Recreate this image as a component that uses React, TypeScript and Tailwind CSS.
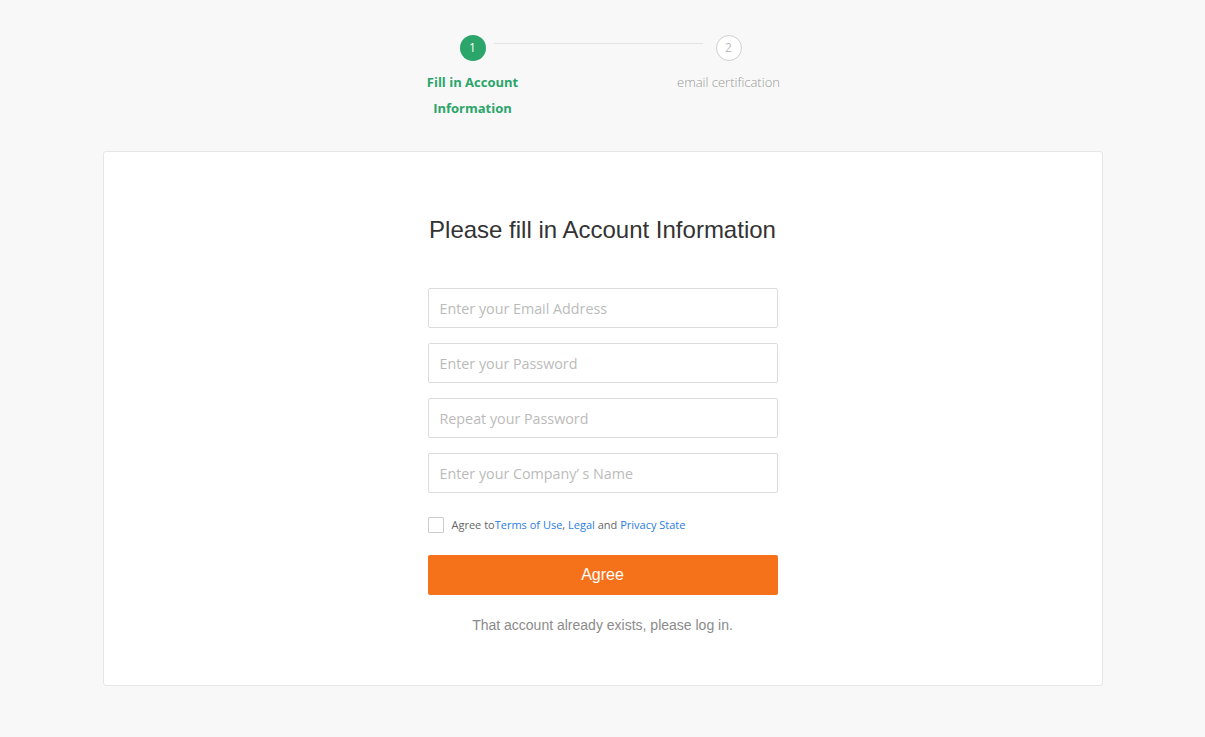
import { useState } from "react";

const cn = "font-['Open_Sans',sans-serif]";

export default function App() {
  const [agreed, setAgreed] = useState(false);

  const fields = [
    "Enter your Email Address",
    "Enter your Password",
    "Repeat your Password",
    "Enter your Company’ s Name",
  ];

  return (
    <div className="min-h-[737px] bg-[#f8f8f8] pt-[35px] pb-[50px]">
      {/* steps */}
      <div className={`relative mx-auto flex w-[370px] justify-between pr-[4px] ${cn}`}>
        <div className="absolute left-[76px] right-[85px] top-[8px] h-px bg-[#e2e2e2]" />
        <div className="relative flex w-[110px] flex-col items-center">
          <div className="flex h-[26px] w-[26px] items-center justify-center rounded-full bg-[#2ba56a] text-[12px] text-white">
            1
          </div>
          <div className="mt-[8px] text-center text-[13px] font-bold leading-[26px] text-[#2ba56a]">
            Fill in Account
            <br />
            Information
          </div>
        </div>
        <div className="relative flex w-[110px] flex-col items-center">
          <div className="flex h-[26px] w-[26px] items-center justify-center rounded-full border border-[#cfcfcf] bg-white text-[12px] text-[#bbb]">
            2
          </div>
          <div className="mt-[8px] text-center text-[13px] font-light leading-[26px] text-[#999]">
            email certification
          </div>
        </div>
      </div>

      {/* card */}
      <div className="mx-auto mt-[30px] w-[1000px] rounded-[3px] border border-[#e6e6e6] bg-white pt-[62px] pb-[50px]">
        <h1 className="text-center font-['Liberation_Sans',Arial,sans-serif] text-[24px] leading-[32px] text-[#333]">
          Please fill in Account Information
        </h1>

        <form className="mx-auto mt-[42px] flex w-[350px] flex-col">
          <div className="flex flex-col gap-[15px]">
            {fields.map((f) => (
              <input
                key={f}
                type={f.includes("Password") ? "password" : "text"}
                placeholder={f}
                className={`h-[40px] w-full rounded-[2px] border border-[#dcdcdc] px-[11px] text-[14.3px] text-[#333] outline-none placeholder:text-[#bbb] ${cn}`}
              />
            ))}
          </div>

          <label className={`mt-[24px] flex h-[16px] items-center gap-[8px] text-[11px] text-[#666] ${cn}`}>
            <input
              type="checkbox"
              checked={agreed}
              onChange={() => setAgreed(!agreed)}
              className="h-[16px] w-[16px] appearance-none rounded-[1px] border border-[#ccc] bg-white checked:bg-[#2ba56a]"
            />
            <span>
              Agree to<a className="text-[#2b7de0]">Terms of Use</a>, <a className="text-[#2b7de0]">Legal</a> and{" "}
              <a className="text-[#2b7de0]">Privacy State</a>
            </span>
          </label>

          <button
            type="button"
            className="mt-[22px] h-[40px] w-full rounded-[2px] bg-[#f6721a] font-['Liberation_Sans',Arial,sans-serif] text-[16px] text-white"
          >
            Agree
          </button>

          <p className="mt-[20px] text-center font-['Liberation_Sans',Arial,sans-serif] text-[14px] leading-[20px] text-[#8b8b8b]">
            That account already exists, please log in.
          </p>
        </form>
      </div>
    </div>
  );
}
